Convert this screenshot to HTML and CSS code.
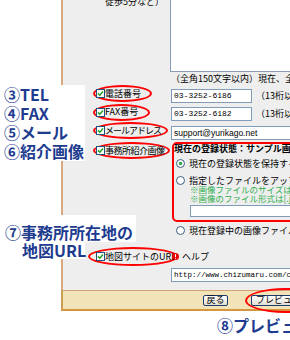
FILE: index.html
```html
<!DOCTYPE html>
<html lang="ja">
<head>
    <meta charset="UTF-8">
    <title>事務所情報の編集</title>
    <link rel="stylesheet" href="styles.css">
</head>
<body>
    <div class="frame">
        <div class="panel">
            <div class="row row-access">
                <div class="lbl"><span class="lbl-note">徒歩5分など）</span></div>
                <div class="val"><div class="textarea"></div></div>
            </div>
            <div class="row row-note">
                <div class="lbl"></div>
                <div class="val">（全角150文字以内）現在、全角0文字</div>
            </div>
            <div class="row row-tel">
                <div class="lbl">
                    <span class="mark mark-tel">
                        <svg class="check" width="9" height="9" viewBox="0 0 9 9"><rect x="0.5" y="0.5" width="8" height="8" fill="#fff" stroke="#1c5180"/><path d="M2 4.4 L3.8 6.2 L7 2.6" fill="none" stroke="#21a121" stroke-width="1.5"/></svg>電話番号
                    </span>
                </div>
                <div class="val"><span class="input input-tel">03-3252-6186</span><span class="hint">（13桁以内）</span></div>
            </div>
            <div class="row row-fax">
                <div class="lbl">
                    <span class="mark mark-fax">
                        <svg class="check" width="9" height="9" viewBox="0 0 9 9"><rect x="0.5" y="0.5" width="8" height="8" fill="#fff" stroke="#1c5180"/><path d="M2 4.4 L3.8 6.2 L7 2.6" fill="none" stroke="#21a121" stroke-width="1.5"/></svg>FAX番号
                    </span>
                </div>
                <div class="val"><span class="input input-tel">03-3252-6182</span><span class="hint">（13桁以内）</span></div>
            </div>
            <div class="row row-mail">
                <div class="lbl">
                    <span class="mark mark-mail">
                        <svg class="check" width="9" height="9" viewBox="0 0 9 9"><rect x="0.5" y="0.5" width="8" height="8" fill="#fff" stroke="#1c5180"/><path d="M2 4.4 L3.8 6.2 L7 2.6" fill="none" stroke="#21a121" stroke-width="1.5"/></svg>メールアドレス
                    </span>
                </div>
                <div class="val"><span class="input input-mail">support@yurikago.net</span></div>
            </div>
            <div class="row row-image">
                <div class="lbl">
                    <span class="mark mark-image">
                        <svg class="check" width="9" height="9" viewBox="0 0 9 9"><rect x="0.5" y="0.5" width="8" height="8" fill="#fff" stroke="#1c5180"/><path d="M2 4.4 L3.8 6.2 L7 2.6" fill="none" stroke="#21a121" stroke-width="1.5"/></svg>事務所紹介画像
                    </span>
                </div>
                <div class="val">
                    <div class="imgbox">
                        <div class="imgbox-title">現在の登録状態：サンプル画像</div>
                        <div class="opt opt-keep">
                            <svg class="radio" width="9" height="9" viewBox="0 0 9 9"><circle cx="4.5" cy="4.5" r="4" fill="#fff" stroke="#3c5a82"/><circle cx="4.5" cy="4.5" r="1.8" fill="#2fa84f"/></svg>
                            <span>現在の登録状態を保持する</span>
                        </div>
                        <div class="opt opt-upload">
                            <svg class="radio" width="9" height="9" viewBox="0 0 9 9"><circle cx="4.5" cy="4.5" r="4" fill="#fff" stroke="#3c5a82"/></svg>
                            <span>指定したファイルをアップロードする</span>
                        </div>
                        <div class="green">※画像ファイルのサイズは100KB以内</div>
                        <div class="green">※画像のファイル形式は[.jpg]のみ</div>
                        <div class="file-input"></div>
                    </div>
                </div>
            </div>
            <div class="row row-delete">
                <div class="lbl"></div>
                <div class="val">
                    <div class="opt">
                        <svg class="radio" width="9" height="9" viewBox="0 0 9 9"><circle cx="4.5" cy="4.5" r="4" fill="#fff" stroke="#3c5a82"/></svg>
                        <span>現在登録中の画像ファイルを削除する</span>
                    </div>
                </div>
            </div>
            <div class="row row-map">
                <div class="lbl">
                    <span class="mark mark-map">
                        <svg class="check" width="9" height="9" viewBox="0 0 9 9"><rect x="0.5" y="0.5" width="8" height="8" fill="#fff" stroke="#1c5180"/><path d="M2 4.4 L3.8 6.2 L7 2.6" fill="none" stroke="#21a121" stroke-width="1.5"/></svg>地図サイトのURL
                    </span>
                </div>
                <div class="val">
                    <svg class="help-icon" width="7" height="7" viewBox="0 0 7 7"><circle cx="3.5" cy="3.5" r="3.5" fill="#e00"/><rect x="3" y="1.2" width="1" height="2.8" fill="#fff"/><rect x="3" y="4.8" width="1" height="1" fill="#fff"/></svg>
                    <span class="help">ヘルプ</span>
                </div>
            </div>
            <div class="row row-url">
                <div class="lbl"></div>
                <div class="val"><span class="input input-url">http://www.chizumaru.com/cgi-bin/map.cgi</span></div>
            </div>
        </div>
        <div class="footer">
            <span class="btn btn-back">戻る</span>
            <span class="preview-mark"><span class="btn">プレビュー</span></span>
        </div>
    </div>
    <div class="callout callout-preview">⑧プレビュー</div>

    <!-- 注釈 -->
    <div class="callout callouts-a">
        <div>③TEL</div>
        <div>④FAX</div>
        <div>⑤メール</div>
        <div>⑥紹介画像</div>
    </div>
    <div class="callout callouts-b">
        <div class="line1">⑦事務所所在地の</div>
        <div class="line2">地図URL</div>
    </div>
</body>
</html>
```

FILE: styles.css
```css
* {
    margin: 0;
    padding: 0;
    box-sizing: border-box;
}

body {
    width: 290px;
    height: 340px;
    overflow: hidden;
    position: relative;
    background-color: #fff;
    color: #000;
    font-family: "Noto Sans CJK JP", sans-serif;
    font-size: 9px;
    line-height: 10px;
}

.frame {
    margin-left: 61px;
    width: 270px;
}

/* パネル */
.panel {
    height: 290px;
    background-color: #eeeeee;
    border-left: 2px solid #d8a880;
    overflow: hidden;
}

.row {
    display: flex;
}

.lbl {
    width: 107px;
    flex: none;
    padding-left: 30px;
    display: flex;
    align-items: center;
}

.val {
    flex: 1;
    display: flex;
    align-items: center;
    white-space: nowrap;
}

.row-access {
    height: 72px;
}

.row-access .lbl {
    align-items: flex-start;
}

.lbl-note {
    margin-top: -3px;
    margin-left: 12px;
    white-space: nowrap;
}

.row-access .val {
    align-items: stretch;
}

.textarea {
    width: 200px;
    background-color: #fff;
    border-left: 1px solid #8a9cb5;
    border-bottom: 1px solid #8a9cb5;
}

.row-note {
    height: 14px;
}

.row-note .val {
    padding-left: 1px;
}

.row-tel,
.row-mail {
    height: 19px;
}

.row-fax {
    height: 18px;
}

/* 赤丸 */
.mark {
    display: inline-flex;
    align-items: center;
    height: 17px;
    margin-bottom: 4px;
    padding-left: 1px;
    border: 2px solid #f00;
    border-radius: 50%;
    white-space: nowrap;
    flex: none;
}

.mark-tel {
    width: 59px;
}

.mark-fax {
    width: 57px;
}

.mark-mail {
    width: 75px;
    letter-spacing: -1px;
}

.mark-image {
    width: 77px;
    letter-spacing: -0.5px;
}

.mark-map {
    width: 90px;
    height: 19px;
    margin: 0 -8px 0 -5px;
    padding-left: 6px;
}

.check,
.radio,
.help-icon {
    display: block;
    flex: none;
}

.input {
    display: block;
    height: 14px;
    margin-left: 1px;
    padding-left: 2px;
    background-color: #fff;
    border: 1px solid #7f9db9;
    font-family: "Liberation Mono", monospace;
    font-size: 8px;
    line-height: 12px;
    overflow: hidden;
    flex: none;
}

.input-tel {
    width: 81px;
}

.hint {
    margin-left: 4px;
}

.input-mail {
    width: 150px;
    font-family: "Liberation Sans", sans-serif;
    font-size: 8.5px;
}

/* 画像 */
.row-image {
    height: 80px;
}

.row-image .lbl,
.row-image .val {
    align-items: flex-start;
}

.row-image .mark {
    margin-bottom: 0;
}

.imgbox {
    margin-left: 2px;
    width: 160px;
    height: 80px;
    border: 2px solid #f00;
    border-radius: 5px;
    white-space: nowrap;
}

.imgbox-title {
    font-weight: bold;
    line-height: 10px;
}

.opt {
    display: flex;
    align-items: center;
    gap: 4px;
    height: 11px;
    padding-left: 2px;
}

.opt-keep {
    margin-top: 4px;
}

.opt-upload {
    margin-top: 7px;
    height: 9px;
}

.green {
    padding-left: 16px;
    color: #2fae4e;
    font-size: 8.5px;
    line-height: 8.5px;
}

.file-input {
    margin: 3px 0 0 16px;
    width: 140px;
    height: 12px;
    background-color: #fff;
    border: 1px solid #7f9db9;
}

.row-delete {
    height: 17px;
}

.row-delete .val {
    padding-left: 4px;
}

.row-map {
    height: 17px;
    margin-top: 9px;
}

.row-map .val {
    padding-left: 2px;
}

.help {
    margin-left: 3px;
}

.row-url {
    height: 19px;
}

.input-url {
    width: 150px;
    font-size: 7.5px;
}

/* フッター */
.footer {
    height: 21px;
    display: flex;
    align-items: center;
    padding-left: 140px;
    background-color: #f3e3b9;
    border-top: 1px solid #d4a478;
    border-bottom: 2px solid #d6963c;
    border-left: 2px solid #c9a050;
}

.btn {
    display: flex;
    align-items: center;
    justify-content: center;
    height: 11px;
    padding: 0 4px;
    border: 1px solid #1c3c6c;
    border-radius: 2px;
    background: linear-gradient(#ffffff, #e2dfd2);
    white-space: nowrap;
    flex: none;
}

.btn-back {
    width: 25px;
}

.preview-mark {
    display: flex;
    align-items: center;
    flex: none;
    width: 80px;
    height: 25px;
    margin-left: 17px;
    padding-left: 4px;
    border: 2px solid #f00;
    border-radius: 50%;
}

/* 注釈 */
.callout {
    color: #1d3b8f;
    font-size: 16px;
    font-weight: bold;
    white-space: nowrap;
}

.callout-preview {
    margin-top: 5px;
    padding-left: 217px;
    line-height: 18px;
}

.callouts-a {
    position: absolute;
    left: 0;
    top: 85px;
    width: 85px;
    padding-left: 4px;
    background-color: #fff;
    line-height: 19px;
}

.callouts-b {
    position: absolute;
    left: 0;
    top: 215px;
    line-height: 17.5px;
}

.callouts-b .line1 {
    width: 136px;
    padding: 9px 0 0 5px;
    background-color: #fff;
}

.callouts-b .line2 {
    width: 85px;
    padding-left: 22px;
    background-color: #fff;
}
```
